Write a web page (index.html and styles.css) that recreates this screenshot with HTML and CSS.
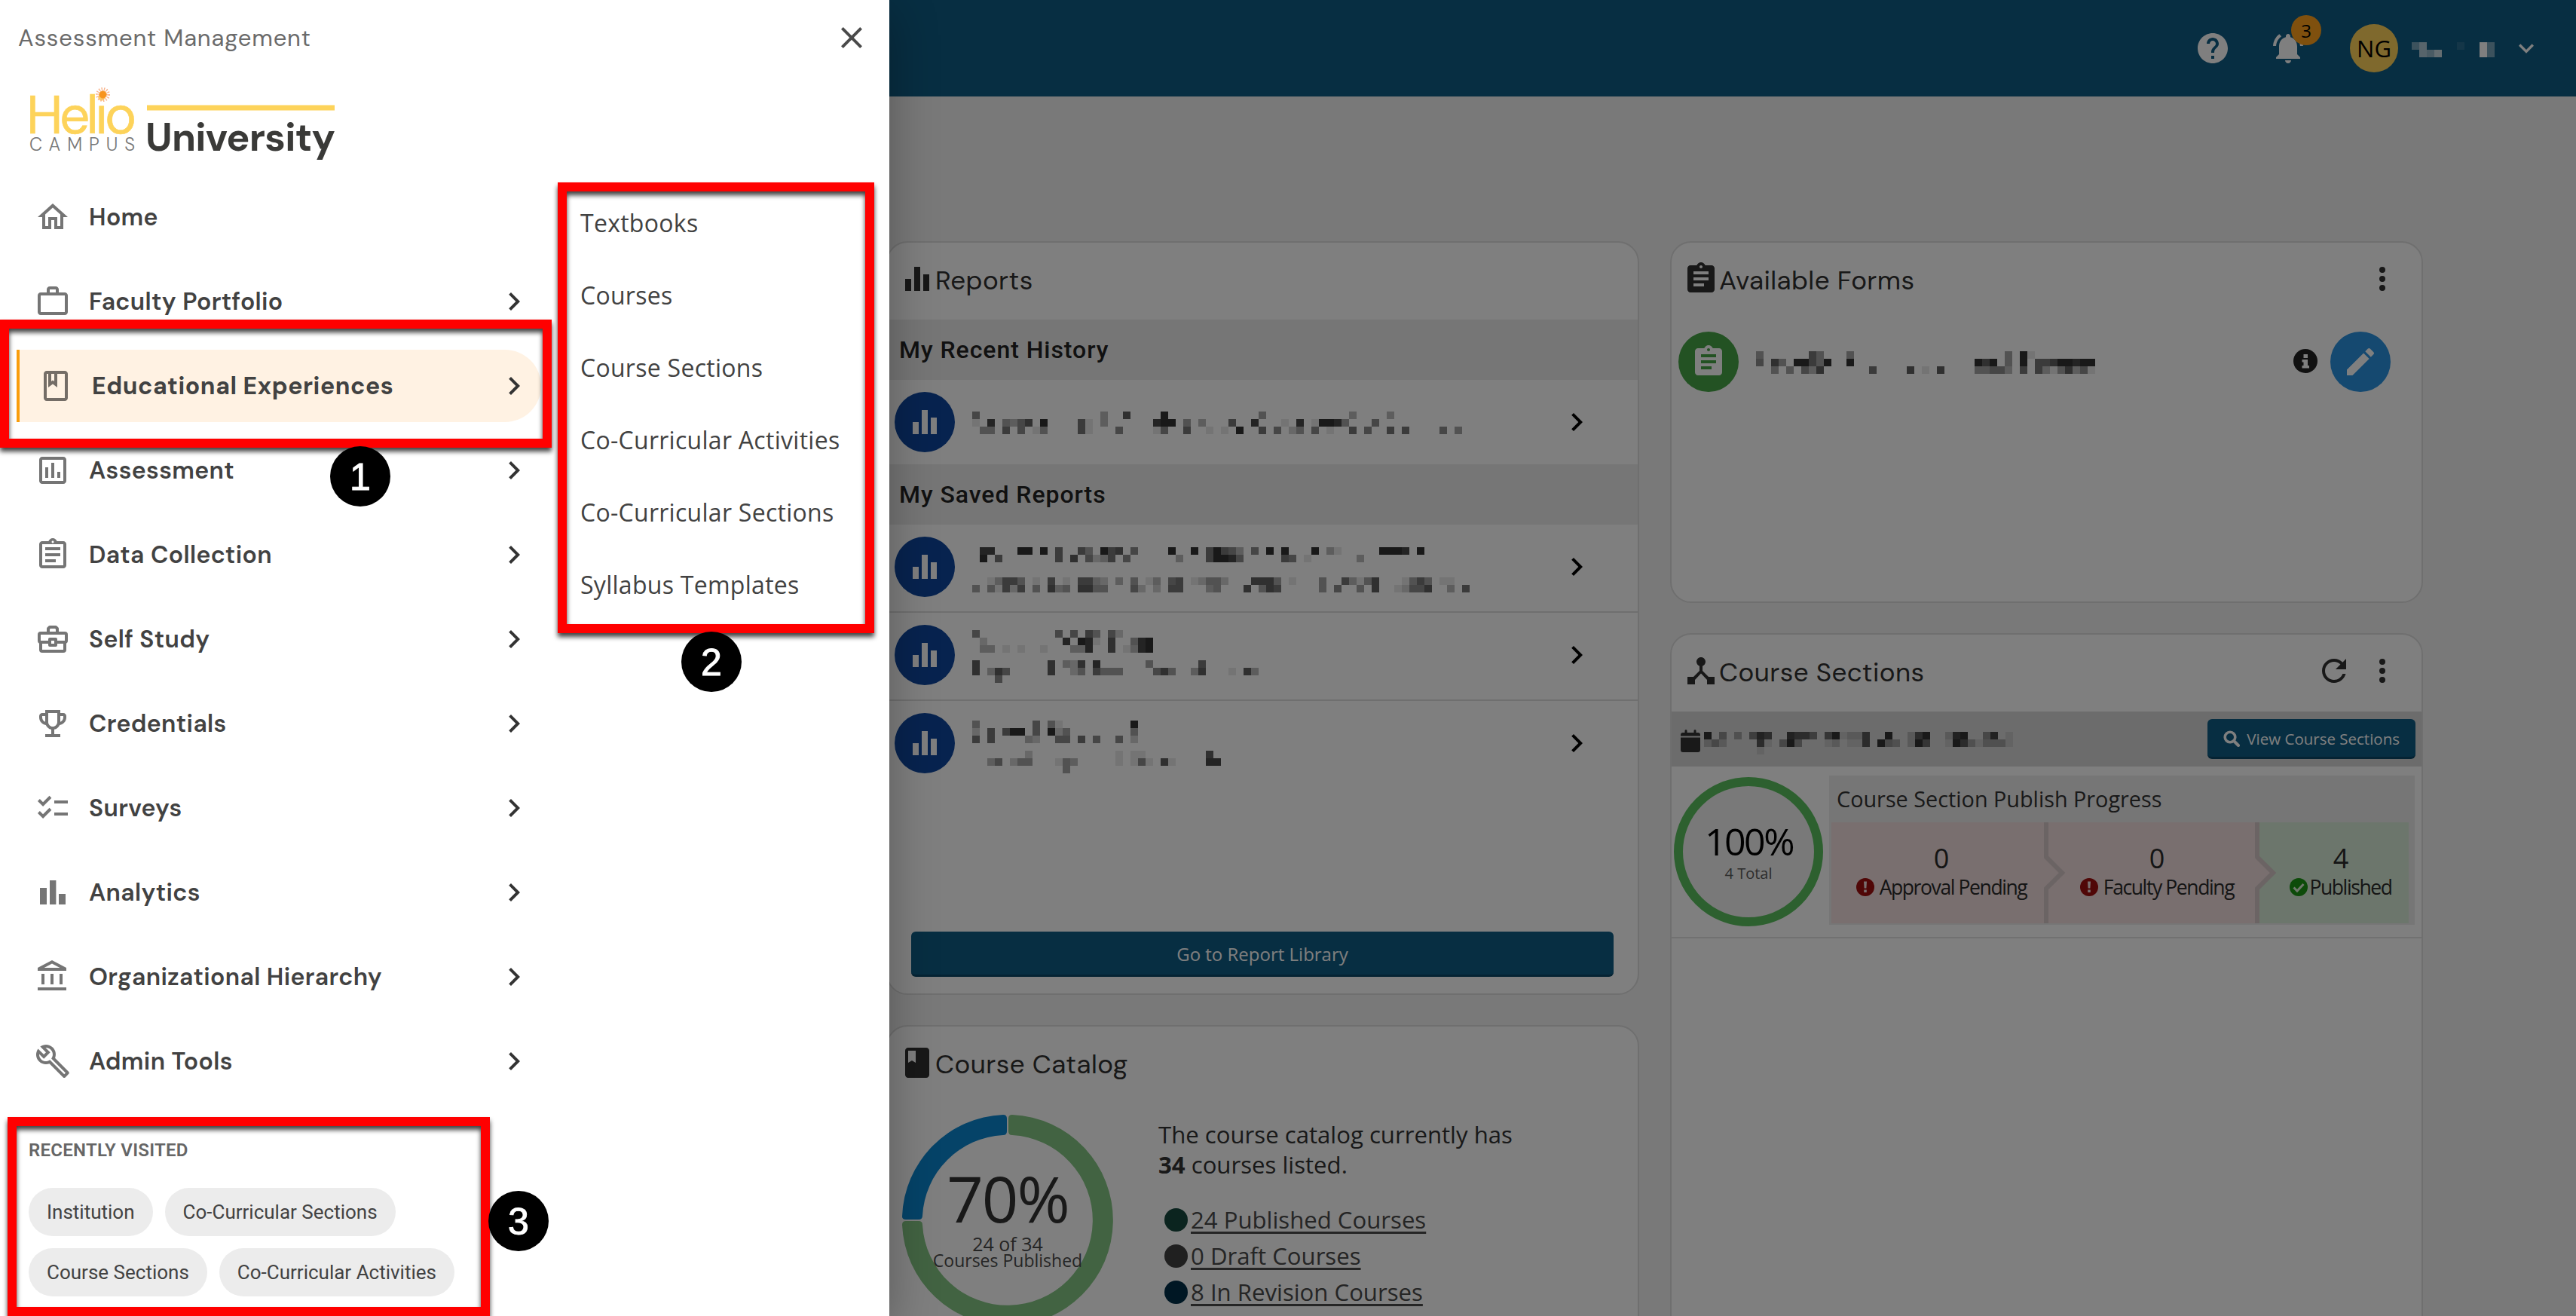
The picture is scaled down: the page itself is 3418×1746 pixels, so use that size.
FILE: index.html
```html
<!DOCTYPE html>
<html lang="en">
<head>
<meta charset="utf-8">
<title>Assessment Management</title>
<link rel="stylesheet" href="styles.css">
</head>
<body>
<svg class="sprite" aria-hidden="true">
  <symbol id="i-chevron" viewBox="0 0 24 24"><path d="M8.59 16.59 13.17 12 8.59 7.41 10 6l6 6-6 6z"/></symbol>
  <symbol id="i-bars" viewBox="0 0 24 24"><path d="M4 12h4v8H4zM10 4h4v16h-4zM16 9h4v11h-4z"/></symbol>
  <symbol id="i-clipboard" viewBox="0 0 24 24"><path d="M19 3h-4.18C14.4 1.84 13.3 1 12 1s-2.4.84-2.82 2H5c-1.1 0-2 .9-2 2v14c0 1.1.9 2 2 2h14c1.1 0 2-.9 2-2V5c0-1.1-.9-2-2-2zm-7 0c.55 0 1 .45 1 1s-.45 1-1 1-1-.45-1-1 .45-1 1-1zm2 14H7v-2h7v2zm3-4H7v-2h10v2zm0-4H7V7h10v2z"/></symbol>
  <symbol id="i-kebab" viewBox="0 0 24 24"><path d="M12 8a2 2 0 1 0 0-4 2 2 0 0 0 0 4zm0 2a2 2 0 1 0 0 4 2 2 0 0 0 0-4zm0 6a2 2 0 1 0 0 4 2 2 0 0 0 0-4z"/></symbol>
  <symbol id="i-alert" viewBox="0 0 24 24"><circle cx="12" cy="12" r="12"/><path fill="#f2dede" d="M10 4.5h4l-.6 9h-2.8zM10.2 15.5h3.6v3.6h-3.6z"/></symbol>
</svg>

<div class="app">
  <header class="topbar">
    <svg class="icon help" viewBox="0 0 24 24"><path d="M12 2C6.48 2 2 6.48 2 12s4.48 10 10 10 10-4.48 10-10S17.52 2 12 2zm1 17h-2v-2h2v2zm2.07-7.75-.9.92C13.45 12.9 13 13.5 13 15h-2v-.5c0-1.1.45-2.1 1.17-2.83l1.24-1.26c.37-.36.59-.86.59-1.41 0-1.1-.9-2-2-2s-2 .9-2 2H8c0-2.21 1.79-4 4-4s4 1.79 4 4c0 .88-.36 1.68-.93 2.25z"/></svg>
    <div class="bell">
      <svg class="icon" viewBox="0 0 24 24"><path d="M7.58 4.08 6.15 2.65C3.75 4.48 2.17 7.3 2.03 10.5h2c.15-2.65 1.51-4.97 3.55-6.42zm12.39 6.42h2c-.15-3.2-1.73-6.02-4.12-7.85l-1.42 1.43c2.02 1.45 3.39 3.77 3.54 6.42zM18 11c0-3.07-1.64-5.64-4.5-6.32V4c0-.83-.67-1.5-1.5-1.5s-1.5.67-1.5 1.5v.68C7.63 5.36 6 7.92 6 11v5l-2 2v1h16v-1l-2-2v-5zm-6 11c1.1 0 2-.9 2-2h-4c0 1.1.89 2 2 2z"/></svg>
      <span class="badge">3</span>
    </div>
    <span class="avatar">NG</span>
    <div class="mosaic user-name" data-cells="0-4 1-6 6-1 9-9 10-4|1-6 2-5 3-7 9-9 10-4"></div>
    <svg class="caret" viewBox="0 0 24 24"><path d="M16.59 8.59 12 13.17 7.41 8.59 6 10l6 6 6-6z"/></svg>
  </header>

  <main class="board">
    <div class="column">
      <section class="card reports">
        <h2 class="card-head"><svg class="icon"><use href="#i-bars"/></svg><span>Reports</span></h2>
        <h3 class="band">My Recent History</h3>
        <div class="report single">
          <span class="disc navy"><svg class="icon"><use href="#i-bars"/></svg></span>
          <div class="mosaic r1" data-cells="0-5 17-3 20-7 25-9 38-4 50-3 55-3|0-1 2-8 4-4 5-3 6-5 7-7 9-9 14-6 15-1 17-3 24-8 25-9 26-9 28-4 30-3 34-6 37-8 41-1 43-8 45-1 46-9 47-9 48-8 49-4 53-5|1-4 2-4 4-6 6-5 8-1 9-4 14-6 15-1 19-5 24-1 25-5 28-6 31-1 33-1 35-9 38-6 40-5 42-2 43-4 45-5 47-1 50-6 52-5 55-6 57-6 62-5 64-4"></div>
          <svg class="icon go"><use href="#i-chevron"/></svg>
        </div>
        <h3 class="band">My Saved Reports</h3>
        <div class="report">
          <span class="disc navy"><svg class="icon"><use href="#i-bars"/></svg></span>
          <div class="mosaic r2" data-cells="1-8 2-8 6-9 7-9 9-9 11-6 14-6 15-4 17-9 18-6 19-7 21-5 26-9 29-9 31-6 32-9 33-6 34-5 35-3 37-5 39-9 41-9 45-9 47-3 48-1 54-9 55-9 56-9 57-8 59-9|1-9 3-6 11-6 13-7 15-5 16-2 17-3 18-6 20-5 27-3 31-6 32-9 33-9 34-8 35-5 41-6 42-5 44-1 51-3|||2-1 3-3 4-6 5-6 6-4 8-1 10-6 12-1 14-6 15-6 16-3 17-2 19-3 21-4 23-1 24-3 26-5 27-6 29-1 30-2 31-4 32-4 33-2 37-7 38-7 39-7 40-4 42-1 46-4 49-6 50-3 51-1 52-4 53-7 57-1 58-4 59-6 60-4 62-1 63-1|0-4 2-4 3-1 4-6 5-2 6-6 8-4 10-7 11-3 12-4 14-7 15-7 16-4 17-4 21-5 22-2 24-2 26-6 27-6 31-3 32-4 36-7 38-4 39-7 40-6 46-4 48-5 51-4 53-7 56-1 57-2 58-5 59-5 60-7 63-3 65-6"></div>
          <svg class="icon go"><use href="#i-chevron"/></svg>
        </div>
        <div class="report">
          <span class="disc navy"><svg class="icon"><use href="#i-bars"/></svg></span>
          <div class="mosaic r3" data-cells="0-5 11-5 13-5 15-6 16-4 18-5 19-2|1-2 12-8 14-9 15-8 16-1 18-7 21-4 22-8 23-9|1-3 2-3 4-1 6-1 9-1 13-3 14-3 15-8 18-7 20-1 21-3 22-8 23-9||0-7 10-7 12-3 13-2 14-7 16-8 23-4 30-6|0-7 2-3 3-7 4-5 10-7 13-2 14-4 16-6 17-4 18-4 19-4 24-5 25-7 26-4 29-3 30-7 34-1 36-7 37-3|3-5"></div>
          <svg class="icon go"><use href="#i-chevron"/></svg>
        </div>
        <div class="report last">
          <span class="disc navy"><svg class="icon"><use href="#i-bars"/></svg></span>
          <div class="mosaic r4" data-cells="0-4 8-5 10-4 11-1 21-9|0-2 2-6 4-6 5-9 6-9 8-5 10-9 11-2 12-4 21-4|0-6 2-6 7-3 8-2 11-5 12-5 14-6 16-5 19-5 21-2||7-2 19-1 21-1 22-1 31-7|2-3 3-5 5-2 6-4 7-4 11-1 12-4 13-3 19-1 21-1 22-5 23-1 25-7 26-1 31-8 32-8|12-4"></div>
          <svg class="icon go"><use href="#i-chevron"/></svg>
        </div>
        <button class="btn library">Go to Report Library</button>
      </section>

      <section class="card catalog">
        <h2 class="card-head"><svg class="icon" viewBox="0 0 24 24"><path d="M18 2H6c-1.1 0-2 .9-2 2v16c0 1.1.9 2 2 2h12c1.1 0 2-.9 2-2V4c0-1.1-.9-2-2-2zM6 4h5v8l-2.500-1.500L6 12V4z"/></svg><span>Course Catalog</span></h2>
        <div class="catalog-body">
          <div class="donut">
            <svg viewBox="0 0 280 280">
              <path fill="#0b86d0" d="M0 135A140 140 0 0 1 134 0q5 0 5 5v17q0 5-5 5A113 113 0 0 0 27 134q0 5-5 5H5q-5 0-5-4z"/>
              <path fill="#84c684" d="M141 5q0-5 5-5A140 140 0 1 1 0 146q0-5 5-5h17q5 0 5 5A113 113 0 1 0 146 27q-5 0-5-5z"/>
            </svg>
            <div class="donut-label"><strong>70%</strong><span class="count">24 of 34</span><span class="what">Courses Published</span></div>
          </div>
          <div class="catalog-text">
            <p>The course catalog currently has<br><b>34</b> courses listed.</p>
            <ul>
              <li class="published"><a>24 Published Courses</a></li>
              <li class="draft"><a>0 Draft Courses</a></li>
              <li class="revision"><a>8 In Revision Courses</a></li>
            </ul>
          </div>
        </div>
      </section>
    </div>

    <div class="column">
      <section class="card forms">
        <h2 class="card-head"><svg class="icon"><use href="#i-clipboard"/></svg><span>Available Forms</span><svg class="icon menu"><use href="#i-kebab"/></svg></h2>
        <div class="form-row">
          <span class="disc green"><svg class="icon"><use href="#i-clipboard"/></svg></span>
          <div class="mosaic form-name" data-cells="0-4 7-6 8-4 12-4 33-4 35-9 36-1|0-5 2-7 3-4 5-9 6-9 7-6 8-4 9-9 12-9 29-9 30-7 31-9 33-4 35-9 37-6 38-6 39-7 40-9 41-9 42-8 43-9 44-9|2-4 4-4 6-5 7-3 8-7 15-6 20-7 22-1 24-7 29-4 30-4 31-5 32-5 33-3 35-6 37-6 38-3 39-1 40-4 41-7 42-3 43-5 44-1"></div>
          <svg class="info" viewBox="0 0 32 32"><circle cx="16" cy="16" r="16" fill="#222"/><path fill="#fff" d="M13.500 7h5.500v5h-5.500zM11.500 14H19v8h2v3.500h-9.500V22h2v-4.500h-2z"/></svg>
          <span class="disc blue"><svg class="icon" viewBox="0 0 24 24"><path d="M3 17.250V21h3.750L17.810 9.940l-3.750-3.750L3 17.250zM20.710 7.040c.39-.39.39-1.020 0-1.410l-2.340-2.340c-.39-.39-1.020-.39-1.410 0l-1.830 1.830 3.750 3.750 1.830-1.830z"/></svg></span>
        </div>
      </section>

      <section class="card sections">
        <h2 class="card-head"><svg class="icon" viewBox="0 0 24 24"><path d="M17 16l-4-4V8.820C14.160 8.400 15 7.300 15 6c0-1.660-1.340-3-3-3S9 4.340 9 6c0 1.300.84 2.400 2 2.820V12l-4 4H3v5h5v-3.050l4-4.200 4 4.200V21h5v-5h-4z"/></svg><span>Course Sections</span>
          <svg class="icon menu" viewBox="0 0 24 24"><path d="M17.650 6.350C16.200 4.900 14.210 4 12 4c-4.420 0-7.990 3.580-7.990 8s3.570 8 7.990 8c3.730 0 6.840-2.550 7.730-6h-2.080c-.82 2.330-3.040 4-5.650 4-3.310 0-6-2.690-6-6s2.690-6 6-6c1.660 0 3.140.69 4.220 1.780L13 11h7V4l-2.350 2.350z"/></svg>
          <svg class="icon more"><use href="#i-kebab"/></svg></h2>
        <div class="term-bar">
          <svg class="calendar" viewBox="0 0 26 30"><path d="M0 10.500h26V27q0 3-3 3H3q-3 0-3-3zM0 8.500V7q0-3 3-3h2.500V1.500Q5.500 0 7 0t1.500 1.500V4h9V1.500Q17.500 0 19 0t1.500 1.500V4H23q3 0 3 3v1.500z"/></svg>
          <div class="mosaic term" data-cells="0-9 2-4 4-3 6-5 7-8 8-7 11-8 12-7 13-7 14-5 16-6 17-9 18-1 19-2 20-2 21-7 24-9 27-2 28-7 29-9 32-2 33-8 34-9 37-4 38-8 40-1|0-2 1-4 2-2 7-7 8-1 10-4 11-9 12-4 16-1 17-2 19-1 20-1 21-7 23-9 24-4 25-3 27-2 28-9 29-6 32-1 33-9 34-7 35-3 36-1 37-3 38-3 39-3 40-1|7-1"></div>
          <button class="btn view"><svg viewBox="0 0 22 22"><circle cx="9" cy="9" r="6.800" fill="none" stroke="currentColor" stroke-width="3.600"/><path d="M14 14l6 6" stroke="currentColor" stroke-width="4" stroke-linecap="round"/></svg>View Course Sections</button>
        </div>
        <div class="progress">
          <div class="ring"><strong>100%</strong><span>4 Total</span></div>
          <div class="steps-panel">
            <h4>Course Section Publish Progress</h4>
            <div class="steps">
              <div class="step pending first"><b>0</b><span><svg class="mark"><use href="#i-alert"/></svg>Approval Pending</span>
                <svg class="edge" viewBox="0 0 30 134"><path class="edge-fill" d="M0 0h3v45l21 22-21 22v45H0z"/><path class="edge-line" d="M3 0v46l21 21-21 21v46"/></svg></div>
              <div class="step pending second"><b>0</b><span><svg class="mark"><use href="#i-alert"/></svg>Faculty Pending</span>
                <svg class="edge" viewBox="0 0 30 134"><path class="edge-fill" d="M0 0h3v45l21 22-21 22v45H0z"/><path class="edge-line" d="M3 0v46l21 21-21 21v46"/></svg></div>
              <div class="step done"><b>4</b><span><svg class="mark" viewBox="0 0 24 24"><circle cx="12" cy="12" r="12"/><path d="M5.500 12.500l4.500 4.500 8.500-9" fill="none" stroke="#dff0d8" stroke-width="3"/></svg>Published</span></div>
            </div>
          </div>
        </div>
      </section>
    </div>
  </main>
  <div class="scrim"></div>

  <aside class="drawer">
    <div class="drawer-head"><span>Assessment Management</span>
      <svg class="icon" viewBox="0 0 24 24"><path d="M19 6.410 17.590 5 12 10.590 6.410 5 5 6.410 10.590 12 5 17.590 6.410 19 12 13.410 17.590 19 19 17.590 13.410 12z"/></svg></div>
    <svg class="logo" viewBox="0 0 420 100">
      <text class="logo-helio" x="-3" y="62" textLength="146">Helio</text>
      <g class="logo-sun"><circle cx="98.500" cy="10.500" r="7" fill="none" stroke-dasharray="1.200 1.900" stroke-width="5"/><circle class="core" cx="98.500" cy="10.500" r="4.600"/></g>
      <text class="logo-campus" x="1" y="85" textLength="140">CAMPUS</text>
      <rect x="157" y="24.500" width="249" height="7" fill="#fdd35a"/>
      <text class="logo-univ" x="155" y="84.500" textLength="252">University</text>
    </svg>
    <div class="drawer-body">
      <nav class="nav">
        <a class="item"><svg class="icon" viewBox="0 0 24 24"><path d="M12 5.690l5 4.500V18h-2v-6H9v6H7v-7.810l5-4.500M12 3L2 12h3v8h6v-6h2v6h6v-8h3L12 3z"/></svg><span>Home</span></a>
        <a class="item"><svg class="icon" viewBox="0 0 24 24"><path fill-rule="evenodd" d="M14 6V4h-4v2h4zM4 8v11h16V8H4zm16-2c1.110 0 2 .89 2 2v11c0 1.110-.89 2-2 2H4c-1.110 0-2-.89-2-2V8c0-1.110.89-2 2-2h4V4c0-1.110.89-2 2-2h4c1.110 0 2 .89 2 2v2h4z"/></svg><span>Faculty Portfolio</span><svg class="icon go"><use href="#i-chevron"/></svg></a>
        <a class="item active"><svg class="icon" viewBox="0 0 24 24"><path fill-rule="evenodd" d="M18 2H6c-1.100 0-2 .9-2 2v16c0 1.100.9 2 2 2h12c1.100 0 2-.9 2-2V4c0-1.100-.9-2-2-2zM9 4h2v5l-1-.75L9 9V4zm9 16H6V4h1v9l3-2.250L13 13V4h5v16z"/></svg><span>Educational Experiences</span><svg class="icon go"><use href="#i-chevron"/></svg></a>
        <a class="item"><svg class="icon" viewBox="0 0 24 24"><path fill-rule="evenodd" d="M19 3H5c-1.100 0-2 .9-2 2v14c0 1.100.9 2 2 2h14c1.100 0 2-.9 2-2V5c0-1.100-.9-2-2-2zm0 16H5V5h14v14zM7 10h2v7H7zm4-3h2v10h-2zm4 6h2v4h-2z"/></svg><span>Assessment</span><svg class="icon go"><use href="#i-chevron"/></svg></a>
        <a class="item"><svg class="icon" viewBox="0 0 24 24"><path fill-rule="evenodd" d="M7 15h7v2H7zm0-4h10v2H7zm0-4h10v2H7zm12-4h-4.180C14.400 1.840 13.300 1 12 1s-2.400.84-2.820 2H5c-1.100 0-2 .9-2 2v14c0 1.100.9 2 2 2h14c1.100 0 2-.9 2-2V5c0-1.100-.9-2-2-2zm-7-.25c.41 0 .75.34.75.75s-.34.75-.75.75-.75-.34-.75-.75.34-.75.75-.75zM19 19H5V5h14v14z"/></svg><span>Data Collection</span><svg class="icon go"><use href="#i-chevron"/></svg></a>
        <a class="item"><svg class="icon" viewBox="0 0 24 24"><path fill="none" stroke="currentColor" stroke-width="2" stroke-linejoin="round" d="M4 14v5q0 1 1 1h14q1 0 1-1v-5M10 14H4q-1 0-1-1V9q0-1 1-1h16q1 0 1 1v4q0 1-1 1h-6M9 8V5l1-1h4l1 1v3M10 12h4v4h-4z"/></svg><span>Self Study</span><svg class="icon go"><use href="#i-chevron"/></svg></a>
        <a class="item"><svg class="icon" viewBox="0 0 24 24"><path fill-rule="evenodd" d="M19 5h-2V3H7v2H5c-1.100 0-2 .9-2 2v1c0 2.550 1.920 4.630 4.390 4.940.63 1.500 1.980 2.630 3.610 2.960V19H7v2h10v-2h-4v-3.100c1.630-.33 2.980-1.460 3.610-2.960C19.080 12.630 21 10.550 21 8V7c0-1.100-.9-2-2-2zM5 8V7h2v3.820C5.840 10.400 5 9.300 5 8zm7 6c-1.650 0-3-1.350-3-3V5h6v6c0 1.650-1.350 3-3 3zm7-6c0 1.300-.84 2.400-2 2.820V7h2v1z"/></svg><span>Credentials</span><svg class="icon go"><use href="#i-chevron"/></svg></a>
        <a class="item"><svg class="icon" viewBox="0 0 24 24"><path d="M22 7h-9v2h9V7zm0 8h-9v2h9v-2zM5.540 11 2 7.460l1.410-1.410 2.120 2.120 4.240-4.240 1.410 1.410L5.540 11zm0 8L2 15.460l1.410-1.410 2.120 2.120 4.240-4.240 1.410 1.410L5.540 19z"/></svg><span>Surveys</span><svg class="icon go"><use href="#i-chevron"/></svg></a>
        <a class="item"><svg class="icon" viewBox="0 0 24 24"><path d="M3.500 9H8v11H3.500zM16 13h4.500v7H16zM10 4h4.200v16H10z"/></svg><span>Analytics</span><svg class="icon go"><use href="#i-chevron"/></svg></a>
        <a class="item"><svg class="icon" viewBox="0 0 24 24"><path d="M6.500 10h-2v7h2v-7zm6 0h-2v7h2v-7zm8.500 9H2v2h19v-2zm-2.500-9h-2v7h2v-7zm-7-6.740L16.710 6H6.290l5.210-2.740m0-2.260L2 6v2h19V6l-9.500-5z"/></svg><span>Organizational Hierarchy</span><svg class="icon go"><use href="#i-chevron"/></svg></a>
        <a class="item"><svg class="icon" viewBox="0 0 24 24"><path fill-rule="evenodd" d="M22.610 18.990l-9.080-9.080c.93-2.340.45-5.100-1.440-7C9.790.61 6.210.4 3.660 2.260L7.500 6.110 6.080 7.520 2.250 3.690C.39 6.230.6 9.820 2.900 12.110c1.860 1.860 4.570 2.350 6.890 1.480l9.110 9.110c.39.39 1.020.39 1.410 0l2.300-2.300c.4-.38.4-1.010 0-1.410zm-3 1.600l-9.460-9.460c-.61.45-1.290.72-2 .82-1.360.2-2.790-.21-3.830-1.250C3.370 9.760 2.930 8.500 3 7.260l3.090 3.090 4.240-4.240-3.090-3.090c1.240-.07 2.490.37 3.440 1.310 1.080 1.080 1.490 2.570 1.240 3.960-.12.71-.42 1.370-.88 1.960l9.450 9.450-.88.890z"/></svg><span>Admin Tools</span><svg class="icon go"><use href="#i-chevron"/></svg></a>
      </nav>
      <nav class="submenu">
        <a>Textbooks</a><a>Courses</a><a>Course Sections</a><a>Co-Curricular Activities</a><a>Co-Curricular Sections</a><a>Syllabus Templates</a>
      </nav>
    </div>
    <section class="recent">
      <h3>RECENTLY VISITED</h3>
      <div class="chips"><a>Institution</a><a>Co-Curricular Sections</a><a>Course Sections</a><a>Co-Curricular Activities</a></div>
    </section>
  </aside>

  <div class="frame frame-1"></div>
  <div class="frame frame-2"></div>
  <div class="frame frame-3"></div>
  <span class="pin pin-1">1</span>
  <span class="pin pin-2">2</span>
  <span class="pin pin-3">3</span>
</div>
<script src="mosaic.js"></script>
</body>
</html>
```
FILE: styles.css
```css
* { box-sizing: border-box; }
body, h2, h3, h4, p, ul { margin: 0; padding: 0; }
body { width: 3418px; height: 1746px; overflow: hidden; font-family: "Open Sans", "Noto Sans", sans-serif; color: #333; }
button { border: 0; font: inherit; }
.sprite { display: none; }
.icon { width: 48px; height: 48px; flex: none; fill: currentColor; }
.mosaic { flex: none; }
.mosaic svg { display: block; overflow: visible; }

.app { position: relative; width: 3418px; height: 1746px; overflow: hidden; background: #f3f3f3; }

/* Top bar */
.topbar { display: flex; align-items: center; justify-content: flex-end; height: 128px; padding-right: 46px; background: #0f5c84; color: #fff; }
.help { margin-right: 52px; }
.bell { position: relative; height: 48px; margin-right: 58px; }
.badge { position: absolute; left: 28px; top: -20px; width: 40px; height: 40px; border-radius: 50%; background: #ffa01c; color: #000; font-size: 24px; line-height: 41px; text-align: center; }
.avatar { width: 64px; height: 64px; margin-right: 18px; border-radius: 50%; background: #ffd25a; color: #000; font-size: 31px; line-height: 64px; text-align: center; letter-spacing: 0; }
.user-name { width: 132px; height: 20px; margin-top: 4px; }
.caret { width: 40px; height: 40px; fill: currentColor; }

/* Dashboard */
.board { display: flex; gap: 41px; padding: 192px 0 0 1176px; isolation: isolate; }
.column { display: flex; flex-direction: column; gap: 40px; width: 999px; }
.card { border: 2px solid #dedede; border-radius: 28px; background: #fff; overflow: hidden; }
.card-head { display: flex; align-items: center; height: 102px; padding: 0 28px 6px 15px; font-family: "DM Sans", Lato, sans-serif; font-size: 35px; font-weight: 400; letter-spacing: .45px; color: #303030; }
.card-head span { padding-top: 3px; }
.card-head .menu { margin-left: auto; }
.card-head .more { margin-left: 16px; }
.reports { display: flex; flex-direction: column; height: 1000px; }
.band { height: 80px; padding-left: 15px; background: #ededed; font-family: Roboto, sans-serif; font-size: 32px; font-weight: 500; line-height: 80px; letter-spacing: .95px; color: #222; }
.disc { display: flex; align-items: center; justify-content: center; flex: none; width: 80px; height: 80px; border-radius: 50%; color: #fff; }
.navy { background: #0e469e; }
.green { background: #46a446; }
.blue { background: #2a92e0; }
.report { display: flex; height: 117px; padding: 16px 57px 0 9px; border-bottom: 2px solid #dedede; }
.single { height: 112px; border: 0; }
.last { border: 0; }
.report .mosaic { margin-left: 23px; }
.report .go { margin: 16px 0 0 auto; color: #000; }
.r1 { margin-top: 26px; }
.r2 { margin-top: 14px; }
.r3 { margin-top: 7px; }
.r4 { margin-top: 10px; }
.btn { background: #0f5c84; color: #fff; border-radius: 6px; border-bottom: 3px solid #0a4767; }
.library { height: 60px; margin: auto 32px 22px 31px; padding-top: 3px; font-size: 24px; }

.catalog { height: 900px; }
.catalog-body { display: flex; padding: 15px 0 0 19px; }
.donut { position: relative; width: 280px; height: 280px; }
.donut > svg { display: block; }
.donut-label { position: absolute; inset: 0; display: flex; flex-direction: column; align-items: center; white-space: nowrap; color: #333; }
.donut-label strong { margin-top: 65px; font-size: 85px; font-weight: 400; line-height: 90px; letter-spacing: -2px; }
.donut-label .count { margin-top: 4px; font-size: 25px; line-height: 24px; color: #4a4a4a; }
.donut-label .what { font-size: 23px; line-height: 20px; color: #4a4a4a; }
.catalog-text { padding: 6px 0 0 60px; font-size: 31.150px; line-height: 40px; }
.catalog-text ul { margin-top: 29px; padding-left: 8px; list-style: none; }
.catalog-text li { display: flex; align-items: center; height: 48px; gap: 4px; color: #4a4a4a; }
.catalog-text li::before { content: ""; width: 31px; height: 31px; border-radius: 50%; background: #404040; }
.catalog-text .published::before { background: #16483e; }
.catalog-text .revision::before { background: #002e48; }
.catalog-text a { text-decoration: underline; text-decoration-thickness: 3px; text-underline-offset: 4px; }

.forms { height: 480px; }
.form-row { display: flex; padding: 16px 41px 0 9px; }
.form-name { margin: 26px 0 0 23px; }
.info { width: 32px; height: 32px; margin: 23px 17px 0 auto; }

.sections { height: 1000px; }
.term-bar { display: flex; align-items: center; height: 73px; margin: 0 -2px; padding: 0 10px 0 14px; background: #d8d8d8; color: #333; }
.calendar { width: 26px; height: 30px; margin-top: 4px; fill: currentColor; }
.term { margin: 10px 0 0 5px; }
.view { display: flex; align-items: center; gap: 9px; height: 53px; margin-left: auto; padding: 2px 21px 0; font-size: 20.500px; }
.view svg { width: 22px; height: 22px; }
.progress { display: flex; height: 228px; padding: 12px 9px 0 3px; border-bottom: 2px solid #e2e2e2; }
.ring { display: flex; flex-direction: column; align-items: center; width: 198px; height: 198px; margin: 2px 8px 0 0; border: 12px solid #5ac05e; border-radius: 50%; background: #f2f2f2; color: #000; }
.ring strong { margin: 43px 0 0 1px; font-size: 50px; font-weight: 400; line-height: 60px; letter-spacing: -2.500px; }
.ring span { font-size: 20px; line-height: 24px; margin-top: 1px; color: #5a5a5a; }
.steps-panel { flex: 1; height: 198px; padding: 0 8px 0 3px; background: #ececec; }
.steps-panel h4 { height: 62px; padding-left: 7px; font-size: 28.800px; font-weight: 400; line-height: 61px; }
.steps { display: flex; height: 134px; }
.step { position: relative; display: flex; flex-direction: column; align-items: center; padding-top: 26px; white-space: nowrap; color: #2a2a2a; }
.step b { font-size: 36px; font-weight: 400; line-height: 44px; }
.step span { display: flex; align-items: center; gap: 7px; font-size: 26.500px; line-height: 32px; letter-spacing: -1.400px; }
.pending { background: #f2dede; }
.first { width: 285px; padding-left: 7px; }
.second { width: 280px; padding-left: 14px; }
.done { flex: 1; padding-left: 21px; background: #d8edd8; }
.done span { gap: 2px; }
.mark { width: 24px; height: 24px; fill: #a00e0e; }
.done .mark { fill: #1a9614; }
.edge { position: absolute; left: 100%; top: 0; z-index: 1; width: 30px; height: 134px; margin-left: -3px; }
.edge-fill { fill: #f2dede; }
.edge-line { fill: none; stroke: #d6c8c8; stroke-width: 6; }

.scrim { position: absolute; inset: 0; background: rgba(0, 0, 0, .5); }

/* Navigation drawer */
.drawer { position: absolute; left: 0; top: 0; width: 1180px; height: 1746px; background: #fff; box-shadow: 0 16px 60px rgba(0, 0, 0, .3); color: #424242; font-family: "DM Sans", Lato, sans-serif; }
.drawer-head { display: flex; align-items: center; justify-content: space-between; height: 100px; padding: 0 26px 0 24px; font-size: 31px; letter-spacing: .85px; color: #6b6b6b; }
.drawer-head .icon { color: #4a4a4a; }
.logo { display: block; width: 420px; height: 100px; margin: 15px 0 0 38px; overflow: visible; }
.logo-helio { font-size: 71px; fill: #fdd35a; stroke: #fdd35a; stroke-width: .6px; }
.logo-campus { font-size: 24px; font-weight: 300; fill: #777; }
.logo-univ { font-size: 52px; font-weight: 700; fill: #3a3a38; }
.logo-sun circle { stroke: #f9b28a; }
.logo-sun .core { fill: #f7941e; stroke: #f7941e; }
.drawer-body { display: flex; padding-top: 25px; }
.nav { width: 740px; }
.item { display: flex; align-items: center; height: 96px; margin: 0 22px 16px; padding: 0 12px 0 24px; font-size: 32px; font-weight: 600; letter-spacing: .35px; }
.item span { margin-left: 24px; }
.item .icon { color: #757575; }
.item .go { margin-left: auto; color: #333; }
.active { border-left: 4px solid #f99d0b; border-radius: 0 48px 48px 0; background: #fff2e3; font-weight: 700; letter-spacing: .55px; }
.active .icon { color: #746d66; }
.active .go { color: #333; }
.submenu { display: flex; flex-direction: column; padding: 8px 0 0 30px; font-family: "Open Sans", sans-serif; font-size: 32px; line-height: 96px; letter-spacing: .28px; white-space: nowrap; }
.recent { padding: 26px 38px 0; font-family: Roboto, sans-serif; }
.recent h3 { margin-top: 12px; font-size: 24px; font-weight: 600; line-height: 32px; letter-spacing: .25px; color: #666; }
.chips { display: flex; flex-wrap: wrap; gap: 16px; width: 600px; margin-top: 34px; }
.chips a { height: 64px; padding: 0 24px; border-radius: 32px; background: #ececec; font-size: 26px; line-height: 64px; }

/* Walkthrough annotations */
.frame { position: absolute; border: 12px solid #f00; filter: drop-shadow(0 5px 3px rgba(0, 0, 0, .75)); }
.frame-1 { left: 0; top: 424px; width: 732px; height: 170px; }
.frame-2 { left: 740px; top: 242px; width: 420px; height: 598px; }
.frame-3 { left: 10px; top: 1482px; width: 640px; height: 264px; }
.pin { position: absolute; width: 80px; height: 80px; border-radius: 50%; background: #000; color: #fff; font: 50px/82px "Liberation Sans", sans-serif; text-align: center; -webkit-text-stroke: 1px #fff; }
.pin-1 { left: 438px; top: 592px; }
.pin-2 { left: 904px; top: 838px; }
.pin-3 { left: 648px; top: 1580px; }
```
FILE: mosaic.js
```js
// Draws the pixelated placeholders for private text.
// Rows are separated by "|", each cell is "column-strength" on a 10px grid.
const NS = "http://www.w3.org/2000/svg";
document.querySelectorAll(".mosaic").forEach(function (box) {
  const rows = box.dataset.cells.split("|");
  let columns = 0;
  const svg = document.createElementNS(NS, "svg");
  rows.forEach(function (row, y) {
    row.split(" ").filter(Boolean).forEach(function (cell) {
      const parts = cell.split("-").map(Number);
      const rect = document.createElementNS(NS, "rect");
      rect.setAttribute("x", parts[0] * 10);
      rect.setAttribute("y", y * 10);
      rect.setAttribute("width", 10);
      rect.setAttribute("height", 10);
      rect.setAttribute("fill", "currentColor");
      rect.setAttribute("fill-opacity", parts[1] / 9);
      columns = Math.max(columns, parts[0] + 1);
      svg.appendChild(rect);
    });
  });
  svg.setAttribute("shape-rendering", "crispEdges");
  svg.setAttribute("width", columns * 10);
  svg.setAttribute("height", rows.length * 10);
  box.appendChild(svg);
});
```
